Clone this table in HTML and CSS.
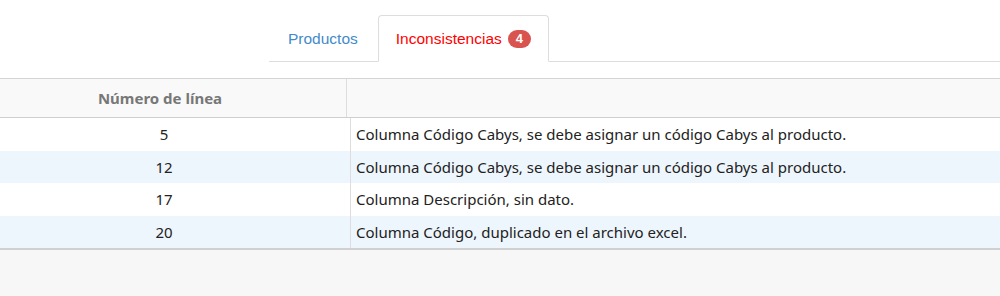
FILE: index.html
```html
<!DOCTYPE html>
<html lang="es">
<head>
<meta charset="utf-8">
<link rel="stylesheet" href="styles.css">
</head>
<body>
<div class="top">
  <ul class="tabs">
    <li class="tab"><span class="tab-link">Productos</span></li>
    <li class="tab active"><span class="tab-link">Inconsistencias <span class="badge">4</span></span></li>
  </ul>
</div>
<div class="grid">
  <div class="grid-head">
    <div class="hcell c1">Número de línea</div>
    <div class="hcell c2"></div>
  </div>
  <div class="grid-body">
    <div class="row"><div class="cell n">5</div><div class="cell d">Columna Código Cabys, se debe asignar un código Cabys al producto.</div></div>
    <div class="row alt"><div class="cell n">12</div><div class="cell d">Columna Código Cabys, se debe asignar un código Cabys al producto.</div></div>
    <div class="row"><div class="cell n">17</div><div class="cell d">Columna Descripción, sin dato.</div></div>
    <div class="row alt"><div class="cell n">20</div><div class="cell d">Columna Código, duplicado en el archivo excel.</div></div>
  </div>
</div>
</body>
</html>
```

FILE: styles.css
```css
html, body { margin: 0; padding: 0; }
body {
  background: #f7f7f7;
  width: 1000px;
  height: 296px;
  overflow: hidden;
}
.top {
  background: #fff;
  padding-top: 15px;
  height: 78px;
  box-sizing: border-box;
}
.tabs {
  list-style: none;
  margin: 0 0 0 269px;
  padding: 0;
  display: flex;
  border-bottom: 1px solid #ddd;
  height: 46px;
  font-family: "Liberation Sans", Arial, sans-serif;
  font-size: 15.5px;
}
.tab {
  margin-bottom: -1px;
}
.tab-link {
  display: flex;
  align-items: center;
  height: 45px;
  padding: 0 19px 0 18px;
  color: #428bca;
  border: 1px solid transparent;
  border-radius: 4px 4px 0 0;
}
.active .tab-link {
  color: #ff0000;
  background: #fff;
  border-color: #ddd;
  border-bottom-color: #fff;
  padding: 0 17px 0 17px;
  gap: 4px;
}
.badge {
  display: inline-flex;
  align-items: center;
  justify-content: center;
  width: 23px;
  height: 18px;
  box-sizing: border-box;
  border-radius: 9px;
  background: #d9534f;
  color: #fff;
  font-weight: bold;
  font-size: 13px;
  margin-left: 2px;
}
.grid {
  background: #fff;
  border-top: 1px solid #d4d4d4;
  font-family: "Noto Sans", "Open Sans", sans-serif;
  font-size: 15px;
  color: #222;
}
.grid-head {
  display: flex;
  height: 38px;
  background: #f9f9f9;
  border-bottom: 1px solid #cfcfcf;
}
.hcell {
  display: flex;
  align-items: center;
  justify-content: center;
  font-weight: bold;
  color: #777;
}
.hcell.c1 { width: 347px; padding-right: 26px; box-sizing: border-box; border-right: 1px solid #ddd; }
.hcell.c2 { flex: 1; }
.grid-body {
  border-bottom: 2px solid #d0d0d0;
}
.row {
  display: flex;
  height: 32.5px;
}
.row.alt { background: #eef6fd; }
.cell {
  display: flex;
  align-items: center;
}
.cell.n {
  width: 351px;
  padding-right: 22px;
  box-sizing: border-box;
  justify-content: center;
  border-right: 1px solid #ddd;
}
.cell.d {
  flex: 1;
  padding-left: 5px;
}
```
